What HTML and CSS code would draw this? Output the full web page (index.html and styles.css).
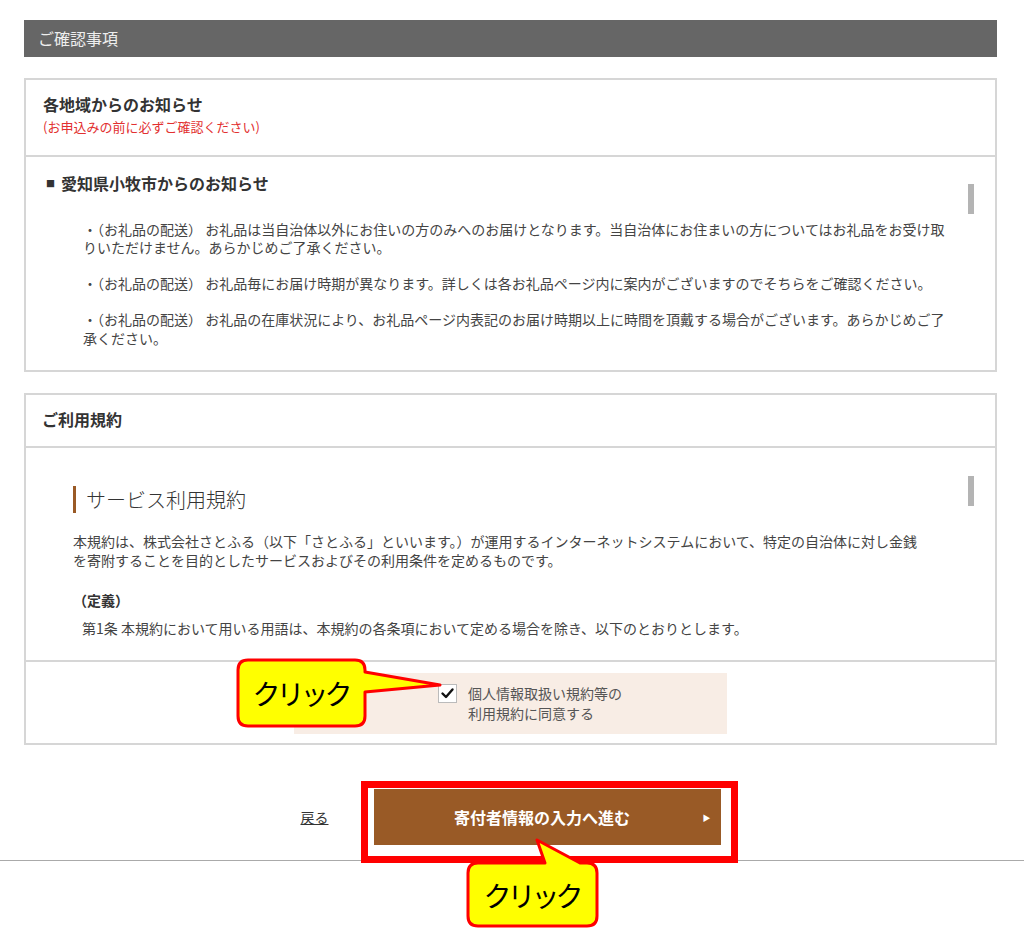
FILE: index.html
```html
<!DOCTYPE html>
<html lang="ja">
<head>
<meta charset="utf-8">
<title>ご確認事項</title>
<link rel="stylesheet" href="styles.css">
</head>
<body>
<div class="page">
  <div class="content">
    <div class="section-title">ご確認事項</div>

    <div class="box box-notice">
      <div class="box-head">
        <h2 class="box-title">各地域からのお知らせ</h2>
        <p class="box-note">(お申込みの前に必ずご確認ください)</p>
      </div>
      <div class="scroll scroll-notice">
        <h3 class="notice-head"><span class="sq">■</span>愛知県小牧市からのお知らせ</h3>
        <p class="item">・（お礼品の配送） お礼品は当自治体以外にお住いの方のみへのお届けとなります。当自治体にお住まいの方についてはお礼品をお受け取<br>りいただけません。あらかじめご了承ください。</p>
        <p class="item">・（お礼品の配送） お礼品毎にお届け時期が異なります。詳しくは各お礼品ページ内に案内がございますのでそちらをご確認ください。</p>
        <p class="item">・（お礼品の配送） お礼品の在庫状況により、お礼品ページ内表記のお届け時期以上に時間を頂戴する場合がございます。あらかじめご了<br>承ください。</p>
        <div class="thumb thumb-notice"></div>
      </div>
    </div>

    <div class="box box-terms">
      <div class="box-head box-head-terms">
        <h2 class="box-title">ご利用規約</h2>
      </div>
      <div class="scroll scroll-terms">
        <h3 class="terms-head">サービス利用規約</h3>
        <p class="terms-text">本規約は、株式会社さとふる（以下「さとふる」といいます。）が運用するインターネットシステムにおいて、特定の自治体に対し金銭<br>を寄附することを目的としたサービスおよびその利用条件を定めるものです。</p>
        <p class="terms-def">（定義）</p>
        <p class="terms-article">第1条 本規約において用いる用語は、本規約の各条項において定める場合を除き、以下のとおりとします。</p>
        <div class="thumb thumb-terms"></div>
      </div>
      <div class="agree">
        <label class="agree-inner">
          <span class="checkbox">
            <svg width="19" height="19" viewBox="0 0 19 19"><polyline points="4.5,9.5 8,13 14.5,5.5" fill="none" stroke="#111" stroke-width="2.4" stroke-linecap="round" stroke-linejoin="round"/></svg>
          </span>
          <span class="agree-text">個人情報取扱い規約等の<br>利用規約に同意する</span>
        </label>
      </div>
    </div>
  </div>

  <div class="actions">
    <a class="back" href="#">戻る</a>
    <a class="next" href="#"><span class="next-label">寄付者情報の入力へ進む</span><span class="next-arrow">▶</span></a>
  </div>

  <div class="red-frame"></div>

  <div class="callout callout-check">
    <svg class="callout-shape" width="127" height="66" viewBox="0 0 127 66"><path d="M10 0 H117 Q127 0 127 10 V12 L202 25 L127 32 V56 Q127 66 117 66 H10 Q0 66 0 56 V10 Q0 0 10 0 Z" fill="#ffff00" stroke="#ff0000" stroke-width="3" stroke-linejoin="round"/></svg>
    <span class="callout-text">クリック</span>
  </div>

  <div class="callout callout-next">
    <svg class="callout-shape" width="129" height="63" viewBox="0 0 129 63"><path d="M10 0 H77 L69 -23 L112 0 H119 Q129 0 129 10 V53 Q129 63 119 63 H10 Q0 63 0 53 V10 Q0 0 10 0 Z" fill="#ffff00" stroke="#ff0000" stroke-width="3" stroke-linejoin="round"/></svg>
    <span class="callout-text">クリック</span>
  </div>
</div>
</body>
</html>
```

FILE: styles.css
```css
* { box-sizing: border-box; }
html, body { margin: 0; padding: 0; background: #fff; }
body {
  font-family: "Noto Sans CJK JP", "Noto Sans", "Liberation Sans", sans-serif;
  color: #444;
  font-size: 14px;
}
h2, h3, p { margin: 0; }

.page { position: relative; width: 1024px; min-height: 937px; }
.content { padding: 20px 27px 0 24px; }

.section-title {
  height: 37px;
  line-height: 37px;
  background: #666;
  color: #eee;
  font-size: 16px;
  padding-left: 14px;
}

.box {
  border: 2px solid #d6d6d6;
  background: #fff;
}
.box-notice { margin-top: 21px; }
.box-terms { margin-top: 21px; }

.box-head {
  padding: 12px 17px 17px;
  border-bottom: 2px solid #d6d6d6;
}
.box-head-terms { padding: 12px 16px 15px; }
.box-title {
  font-size: 16px;
  line-height: 24px;
  font-weight: bold;
  color: #333;
}
.box-note {
  font-size: 13px;
  line-height: 22px;
  color: #e23030;
}

.scroll {
  position: relative;
  overflow: hidden;
}
.scroll-notice { height: 213px; padding: 15px 0 0 19px; }
.scroll-terms {
  height: 214px;
  padding: 38px 0 0 47px;
  border-bottom: 2px solid #d6d6d6;
}

.thumb {
  position: absolute;
  right: 21px;
  width: 6px;
  height: 30px;
  background: #b4b4b4;
}
.thumb-notice { top: 27px; }
.thumb-terms { top: 28px; }

.notice-head {
  font-size: 16px;
  line-height: 22px;
  font-weight: bold;
  color: #333;
}
.sq {
  display: inline-block;
  font-size: 9px;
  line-height: 9px;
  width: 9px;
  margin: 0 6px 0 1px;
  vertical-align: 3px;
}
.item {
  margin: 17.5px 0 0 38px;
  line-height: 18.5px;
  white-space: nowrap;
}
.notice-head + .item { margin-top: 25.5px; }

.terms-head {
  font-size: 20px;
  line-height: 27px;
  height: 27px;
  font-weight: 300;
  color: #333;
  border-left: 3px solid #9a5a26;
  padding-left: 10px;
}
.terms-text {
  margin-top: 19px;
  line-height: 18.5px;
  white-space: nowrap;
}
.terms-def {
  margin-top: 22px;
  line-height: 18.5px;
  font-weight: bold;
  color: #333;
}
.terms-article {
  margin-top: 9.5px;
  padding-left: 9px;
  line-height: 18.5px;
  white-space: nowrap;
}

.agree { padding: 11px 0 9px; }
.agree-inner {
  display: flex;
  align-items: flex-start;
  gap: 11px;
  width: 433px;
  height: 61px;
  margin: 0 auto;
  padding: 10px 0 0 144px;
  background: #f8ede5;
  cursor: pointer;
}
.checkbox {
  display: block;
  width: 19px;
  height: 19px;
  margin-top: 1px;
  background: #fff;
  border: 1px solid #bbb;
  flex: none;
}
.checkbox svg { display: block; margin: -1px; }
.agree-text {
  font-size: 14px;
  line-height: 20px;
  color: #555;
}

.actions {
  margin-top: 44px;
  display: flex;
  justify-content: center;
  align-items: center;
  gap: 45px;
  padding: 0 3px 15px 0;
  border-bottom: 1px solid #aaa;
}
.back {
  color: #333;
  font-size: 14px;
  text-decoration: underline;
}
.next {
  display: grid;
  grid-template-columns: 30px 1fr 30px;
  align-items: center;
  width: 347px;
  height: 56px;
  padding-right: 10px;
  background: #995a26;
  color: #fff;
  text-decoration: none;
  font-weight: bold;
  font-size: 16px;
}
.next-label { grid-column: 2; text-align: center; }
.next-arrow {
  grid-column: 3;
  justify-self: end;
  font-size: 8px;
  font-weight: normal;
}

.red-frame {
  position: absolute;
  left: 361px;
  top: 781px;
  width: 377px;
  height: 82px;
  border: 7px solid #ff0000;
}

.callout {
  position: absolute;
  display: flex;
  align-items: center;
  justify-content: center;
}
.callout-check { left: 238px; top: 660px; width: 127px; height: 66px; }
.callout-next { left: 468px; top: 863px; width: 129px; height: 63px; }
.callout-shape {
  position: absolute;
  left: 0;
  top: 0;
  overflow: visible;
}
.callout-text {
  position: relative;
  font-size: 28px;
  letter-spacing: -4px;
  color: #000;
  line-height: 1;
  padding-right: 2px;
}
```
